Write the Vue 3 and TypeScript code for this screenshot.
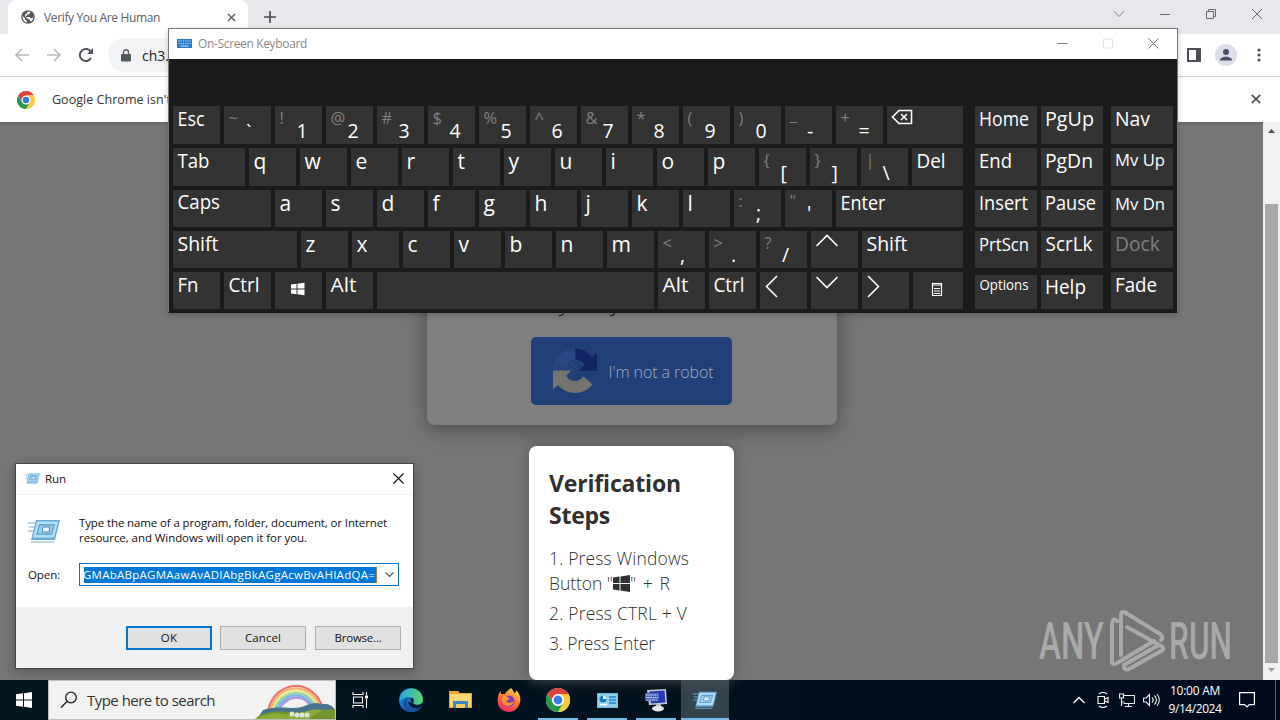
<script setup lang="ts">
interface Glyph { t: string; x: number; y: number; s: number; w?: number; dim?: boolean }
interface Key { w: number; g: Glyph[]; icon?: string; low?: boolean }

/* Spreads a label's letters so that it takes up the given width. */
const vFit = {
  mounted(el: HTMLElement, binding: { value: number }) {
    const natural = el.getBoundingClientRect().width
    const count = (el.textContent || '').trim().length
    el.style.letterSpacing = ((binding.value - natural) / count).toFixed(3) + 'px'
  }
}

const word = (t: string, w: number, len: number, y = 20, s = 19.5, x = 4.5): Key => ({ w, g: [{ t, x, y, s, w: len }] })
const letter = (t: string, y = 20.5): Key => ({ w: 47, g: [{ t, x: 4.5, y, s: 21 }] })
const pair = (top: string, main: string, x = 21.5, y = 32, ty = 18): Key => ({
  w: 47,
  g: [{ t: top, x: 4.5, y: ty, s: 16.5, dim: true }, { t: main, x, y, s: 19.5 }]
})
const icon = (name: string, w = 47): Key => ({ w, g: [], icon: name })

const rows: Key[][] = [
  [word('Esc', 47, 27), pair('~', '`', 22, 33), pair('!', '1'), pair('@', '2'), pair('#', '3'), pair('$', '4'), pair('%', '5'),
    pair('^', '6'), pair('&', '7'), pair('*', '8'), pair('(', '9'), pair(')', '0'), pair('_', '-', 22, 32, 15), pair('+', '=', 22.5), icon('back', 76)],
  [word('Tab', 72, 32), ...'qwertyuiop'.split('').map((c) => letter(c)), pair('{', '['), pair('}', ']'), pair('|', '\\'), word('Del', 51, 29)],
  [word('Caps', 98, 42.5, 19), ...'asdfghjkl'.split('').map((c) => letter(c, 20.5)), pair(':', ';', 22, 30, 17), pair('"', "'", 22, 30, 17), word('Enter', 127, 45, 20)],
  [word('Shift', 124, 41), ...'zxcvbnm'.split('').map((c) => letter(c, 21)), pair('<', ',', 22, 31, 18), pair('>', '.', 22, 31, 18), pair('?', '/', 22, 31, 18), icon('up'), word('Shift', 101, 41)],
  [word('Fn', 47, 21), word('Ctrl', 47, 31), icon('win'), word('Alt', 47, 26), { w: 277, g: [] }, word('Alt', 47, 26), word('Ctrl', 47, 31),
    icon('left'), icon('down'), icon('right'), icon('menu', 50)]
]

const side: Key[][] = [
  [word('Home', 62, 50, 20, 19.5, 4), word('PgUp', 62, 49, 19.5, 19.5, 4), word('Nav', 62, 35, 20, 19.5, 4)],
  [word('End', 62, 33, 20, 19.5, 4), word('PgDn', 62, 48, 19.5, 19.5, 4), word('Mv Up', 62, 50, 17.5, 16.5, 4)],
  [word('Insert', 62, 49, 20, 19.5, 4), word('Pause', 62, 51, 20, 19.5, 4), word('Mv Dn', 62, 50, 20, 16.5, 4)],
  [word('PrtScn', 62, 50, 20, 17.5, 4), word('ScrLk', 62, 47, 20, 19.5, 4.5), { w: 62, g: [{ t: 'Dock', x: 4, y: 20, s: 19.5, w: 45, dim: true }] }],
  [{ ...word('Options', 62, 49, 14.5, 14, 4.5), low: true }, { ...word('Help', 62, 41, 19, 19.5, 4), low: true }, word('Fade', 62, 42, 20, 19.5, 4)]
]
</script>

<template>
  <div class="desktop">
    <!-- browser -->
    <section class="browser">
      <header class="strip">
        <div class="tab">
          <svg class="globe" width="14" height="14" viewBox="0 0 14 14"><circle cx="7" cy="7" r="6.8" fill="#55585d" /><path d="M1.600 6 4 8.200v1.200l1.800 1.400v1.700C3 12 1.400 9.500 1.600 6zM6 1.700h3.200V3L7.800 4.300H6.200v1.300H4.800v1.300h4l1.100 1.300h1.600c.3-.8.8-1.500.8-2.300a5.500 5.500 0 0 1-2.600 5.600L9 11v-1.400H7.300L4 6.200V4.500l2-1z" fill="#fff" /></svg>
          <span class="tab-title"><span v-fit="116">Verify You Are Human</span></span>
          <svg width="9" height="9" viewBox="0 0 9 9"><path d="M1 1l7 7M8 1l-7 7" stroke="#5f6368" stroke-width="1.500" /></svg>
        </div>
        <svg class="plus" width="12" height="12" viewBox="0 0 12 12"><path d="M6 0v12M0 6h12" stroke="#4b4e52" stroke-width="1.700" /></svg>
        <div class="caption">
          <svg width="12" height="12" viewBox="0 0 12 12"><path d="M1 3l5 5.500L11 3" fill="none" stroke="#85888c" /></svg>
          <svg width="12" height="12" viewBox="0 0 12 12"><path d="M1 6.500h10" stroke="#66696d" /></svg>
          <svg width="12" height="12" viewBox="0 0 12 12"><path d="M1.500 3.500h7v7h-7zM3.500 3.500v-2h7v7h-2" fill="none" stroke="#66696d" /></svg>
          <svg width="12" height="12" viewBox="0 0 12 12"><path d="M1 1l10 10M11 1L1 11" stroke="#66696d" /></svg>
        </div>
      </header>
      <div class="toolbar">
        <svg width="16" height="16" viewBox="0 0 16 16"><path d="M15 8H2M8 2L2 8l6 6" fill="none" stroke="#b9bbbe" stroke-width="1.700" /></svg>
        <svg width="16" height="16" viewBox="0 0 16 16"><path d="M1 8h13M8 2l6 6-6 6" fill="none" stroke="#b9bbbe" stroke-width="1.700" /></svg>
        <svg width="16" height="16" viewBox="0 0 16 16"><path d="M13 11a6 6 0 1 1 0-6" fill="none" stroke="#505359" stroke-width="2" /><path d="M15 1v6H9z" fill="#505359" /></svg>
        <div class="address">
          <svg width="10" height="13" viewBox="0 0 10 13"><path d="M1 5h8a1 1 0 0 1 1 1v5.500a1 1 0 0 1-1 1H1a1 1 0 0 1-1-1V6a1 1 0 0 1 1-1z" fill="#55585d" /><path d="M2.500 5.500V3.200a2.500 2.500 0 0 1 5 0v2.300" fill="none" stroke="#55585d" stroke-width="1.400" /></svg>
          <span class="url">ch3.</span>
        </div>
        <div class="tools">
          <svg width="14" height="14" viewBox="0 0 14 14"><path d="M0 0h14v14H0zM2 2v10h7V2z" fill="#4b4e55" fill-rule="evenodd" /></svg>
          <svg width="22" height="22" viewBox="0 0 22 22"><circle cx="11" cy="11" r="11" fill="#dcdfe8" /><circle cx="11" cy="8" r="3" fill="#484e67" /><path d="M5 16.500c0-5 12-5 12 0z" fill="#484e67" /></svg>
          <svg width="4" height="14" viewBox="0 0 4 14"><g fill="#505359"><circle cx="2" cy="2" r="1.600" /><circle cx="2" cy="7" r="1.600" /><circle cx="2" cy="12" r="1.600" /></g></svg>
        </div>
      </div>
      <div class="infobar">
        <svg width="18" height="18" viewBox="0 0 24 24"><use href="#chrome-mark" /></svg>
        <span class="info-text"><span v-fit="119">Google Chrome isn't</span></span>
        <svg class="info-close" width="10" height="10" viewBox="0 0 10 10"><path d="M.8.800l8.400 8.400M9.200.800L.8 9.200" stroke="#505357" stroke-width="1.800" /></svg>
      </div>
      <div class="page">
        <div class="view">
          <div class="card">
            <svg class="tails" width="62" height="6" viewBox="0 0 62 6"><path d="M2 2.500c3 .8 4-.5 5-3.500M53 2.500c3 .8 4-.5 5-3.500" fill="none" stroke="#292929" stroke-width="1.300" /></svg>
            <div class="robot">
              <svg width="48" height="48" viewBox="0 0 48 48">
                <path d="M24.500 1.500c8 .2 12 3.500 16.500 9l5-5v18.200H27.500l6-6c-2-3.500-5-4.500-9-4.700z" fill="#112462" />
                <path d="M24 1.500v11.300c-4 .2-6 1.700-7.500 4l5.500 6.400H2C2 12 11 1.500 24 1.500z" fill="#264780" />
                <path d="M13 5l7 6M6 12l8 4M19 15l7 7" stroke="#34558a" fill="none" />
                <path d="M2 23.500h18l-5 5.500c5 7 13 6 17.500.5l9 8C32 49 16 48.500 7 38l-5 4.500z" fill="#74736f" />
              </svg>
              <span class="robot-text"><span v-fit="105">I'm not a robot</span></span>
            </div>
          </div>
          <div class="modal">
            <h2><span v-fit="132">Verification</span><br /><span v-fit="61">Steps</span></h2>
            <p><span v-fit="140">1. Press Windows</span><br /><span v-fit="64">Button "</span><svg class="flag" width="17" height="17" viewBox="0 0 17 17"><path d="M0 2.500 6.500 1.600V8H0zM7.500 1.400 17 0v8H7.500zM0 9h6.500v6.400L0 14.500zM7.500 9H17v8l-9.500-1.400z" fill="#303030" /></svg><span v-fit="41">" + R</span></p>
            <p><span v-fit="138">2. Press CTRL + V</span></p>
            <p><span v-fit="106">3. Press Enter</span></p>
          </div>
          <svg class="watermark" width="196" height="64" viewBox="0 0 196 64">
            <g fill="#a9a9a9" font-family="Roboto" font-size="52" font-weight="500">
              <text x="2" y="51" textLength="65" lengthAdjust="spacingAndGlyphs">ANY</text>
              <text x="132" y="51" textLength="63" lengthAdjust="spacingAndGlyphs">RUN</text>
            </g>
            <g fill="none" stroke="#a9a9a9" stroke-width="4" stroke-linejoin="round" stroke-linecap="round">
              <path d="M80 13q-4-4-5 3v38q1 4 5 1l37-22" />
              <path d="M84 47V7q0-5 5-2l34 21q4 4 1 6" />
              <path d="M90 19l34 19q5 3 0 5L92 61q-6 2-5-4l33-19" />
            </g>
          </svg>
        </div>
        <div class="scroll">
          <svg width="9" height="5" viewBox="0 0 9 5"><path d="M1 5l3.500-4L8 5z" fill="#505050" /></svg>
          <i></i>
          <svg width="9" height="5" viewBox="0 0 9 5"><path d="M1 0l3.500 4L8 0z" fill="#9a9a9a" /></svg>
        </div>
      </div>
    </section>

    <!-- on-screen keyboard -->
    <section class="osk">
      <header>
        <svg width="15" height="9" viewBox="0 0 15 9"><path d="M0 0h15v9H0z" fill="#2a7acb" /><path d="M1.500 2h12M1.500 4.500h12" stroke="#d3e7f9" stroke-dasharray="1.200 1" /><path d="M3.500 7h8" stroke="#d3e7f9" /></svg>
        <span class="osk-title"><span v-fit="109">On-Screen Keyboard</span></span>
        <div class="osk-caption">
          <svg width="11" height="11" viewBox="0 0 11 11"><path d="M.5 5.500h10" stroke="#777" /></svg>
          <svg width="11" height="11" viewBox="0 0 11 11"><path d="M.5 1h9v9h-9z" fill="none" stroke="#e2e2e2" /></svg>
          <svg width="11" height="11" viewBox="0 0 11 11"><path d="M.5.500l10 10M10.500.500l-10 10" stroke="#777" /></svg>
        </div>
      </header>
      <div class="board">
        <div v-for="(row, r) in rows" :key="r" class="row">
          <div class="group">
            <div v-for="(k, i) in row" :key="i" class="key" :style="{ width: k.w + 'px' }">
              <svg width="100%" height="100%">
                <text v-for="g in k.g" :key="g.t" :x="g.x" :y="g.y" :font-size="g.s" :textLength="g.w" lengthAdjust="spacingAndGlyphs" :class="{ dim: g.dim }">{{ g.t }}</text>
                <path v-if="k.icon === 'back'" d="M12 4.500h12.500v13H12l-6.500-6.500zM14 8l6 6M20 8l-6 6" />
                <path v-if="k.icon === 'up'" d="M5.500 15L16 4.500 26.500 15" />
                <path v-if="k.icon === 'down'" d="M5.500 5L16 15.500 26.500 5" />
                <path v-if="k.icon === 'left'" d="M17 4L6.500 14.500 17 25" />
                <path v-if="k.icon === 'right'" d="M6 4l10.500 10.500L6 25" />
                <path v-if="k.icon === 'win'" class="solid" d="M16 12.500l5.500-.7v4.700H16zM22.500 11.700l7-.9v5.700h-7zM16 17.500h5.500v4.700l-5.500-.7zM22.500 17.500h7v5.700l-7-.9z" />
                <path v-if="k.icon === 'menu'" class="thin" d="M19.500 11.500h9v12h-9zM19.500 13h9M21 16.500h6M21 19h6M21 21.500h6" />
              </svg>
            </div>
          </div>
          <div class="group side">
            <div v-for="(k, i) in side[r]" :key="i" class="key nav" :class="{ low: k.low }">
              <svg width="100%" height="100%">
                <text v-for="g in k.g" :key="g.t" :x="g.x" :y="g.y" :font-size="g.s" :textLength="g.w" lengthAdjust="spacingAndGlyphs" :class="{ dim: g.dim }">{{ g.t }}</text>
              </svg>
            </div>
          </div>
        </div>
      </div>
    </section>

    <!-- run dialog -->
    <section class="run">
      <header>
        <svg width="15" height="11" viewBox="0 0 32 24"><use href="#run-mark" /></svg>
        <span class="run-title"><span v-fit="21">Run</span></span>
        <svg class="run-close" width="11" height="11" viewBox="0 0 11 11"><path d="M.5.500l10 10M10.500.500l-10 10" stroke="#111" stroke-width="1.100" /></svg>
      </header>
      <div class="run-body">
        <div class="message">
          <svg width="32" height="24" viewBox="0 0 32 24"><use href="#run-mark" /></svg>
          <p><span v-fit="308">Type the name of a program, folder, document, or Internet</span><br /><span v-fit="228">resource, and Windows will open it for you.</span></p>
        </div>
        <div class="open">
          <label><span v-fit="32">Open:</span></label>
          <div class="combo">
            <div class="selected"><span v-fit="292">GMAbABpAGMAawAvADIAbgBkAGgAcwBvAHIAdQA=</span></div>
            <svg width="9" height="6" viewBox="0 0 9 6"><path d="M.5.500l4 4 4-4" fill="none" stroke="#555" stroke-width="1.200" /></svg>
          </div>
        </div>
      </div>
      <footer>
        <button class="primary"><span v-fit="16.500">OK</span></button>
        <button><span v-fit="36">Cancel</span></button>
        <button><span v-fit="47">Browse...</span></button>
      </footer>
    </section>

    <!-- taskbar -->
    <nav class="taskbar">
      <div class="start"><svg width="16" height="16" viewBox="0 0 16 16"><path d="M0 2.300 7 1.300v6.200H0zM8 1.200 16 0v7.500H8zM0 8.500h7v6.200l-7-1zM8 8.500h8V16l-8-1.200z" fill="#fff" /></svg></div>
      <div class="search">
        <svg width="18" height="18" viewBox="0 0 18 18"><circle cx="11" cy="6.500" r="5.300" fill="none" stroke="#222" stroke-width="1.300" /><path d="M7 10.500L1 16.500" stroke="#222" stroke-width="1.400" /></svg>
        <span class="search-text"><span v-fit="128">Type here to search</span></span>
        <svg class="rainbow" width="80" height="38" viewBox="0 0 80 38">
          <g fill="none" stroke-width="2.200">
            <path d="M13 30C20-2 59-4 68 28" stroke="#e8746a" />
            <path d="M15 30.500C22 1 57-1 66 28.500" stroke="#f2b06c" />
            <path d="M17 31C24 4 55 2 64 29" stroke="#efe58c" />
            <path d="M19 31C26 7 54 5 62 29.500" stroke="#8fd699" />
            <path d="M21 31C28 10 52 8 60 30" stroke="#79b0ee" />
            <path d="M23 31C30 13 51 11 58 30" stroke="#a793e0" />
          </g>
          <path d="M8 29c12-4 24-2 31-2 9 0 15-5 22-5 8 2 12-1 18 5v11H2z" fill="#47738f" />
          <path d="M0 38c8-8 24-8 34-7 15 1 23-2 46-3v10z" fill="#74952e" />
          <path d="M0 38c14-7 25-6 36-4 12-1 18-7 31-5L54 38z" fill="#8aab38" />
          <g fill="#dfe3df"><circle cx="37" cy="33" r="2.500" /><circle cx="42" cy="34" r="2.500" /><circle cx="47" cy="34" r="2.500" /><circle cx="52" cy="34" r="2.500" /></g>
        </svg>
      </div>
      <div class="cell view-btn"><svg width="17" height="16" viewBox="0 0 17 16"><path d="M1 0v2.500h10V0M1.500 5h9v6h-9zM1 16v-2.500h10V16M14.500 0v3M14.500 7v9" fill="none" stroke="#fff" stroke-width="1.100" /><path d="M13 3.500h3v3h-3z" fill="#fff" /></svg></div>
      <div class="cell">
        <svg width="24" height="24" viewBox="0 0 24 24">
          <defs><linearGradient id="sea" x1="0" y1="0" x2="1" y2="0"><stop offset="0" stop-color="#2ba9e6" /><stop offset="1" stop-color="#56d56b" /></linearGradient></defs>
          <circle cx="12" cy="12" r="12" fill="#1276c9" /><path d="M1 9C4-2 22-3 24 11c0 6-7 7-10 5 1-2 1-7-4-7-4 0-8 2-9 5z" fill="url(#sea)" /><path d="M8 12c-2 8 7 11 15 6-2 4-6 6-11 6C3 24 2 13 9 10z" fill="#174f9c" /><path d="M15 15c-5-1-4-6-1-5 1 1 1 3 0 5 4 4 9 1 10-1 0 3-2 5-4 6-6 1-10-1-11-6z" fill="#07182a" />
        </svg>
      </div>
      <div class="cell"><svg width="23" height="20" viewBox="0 0 23 20"><path d="M0 1h9l2 2h12v15H0z" fill="#e6a72d" /><path d="M1 4h21v13H1z" fill="#fbd673" /><path d="M4 11h15v7h-3v-3H7v3H4z" fill="#3b88c5" /><path d="M7 14h9v4H7z" fill="#f5ca61" /></svg></div>
      <div class="cell">
        <svg width="24" height="24" viewBox="0 0 24 24">
          <defs><linearGradient id="fire" x1=".8" y1="0" x2=".3" y2="1"><stop offset="0" stop-color="#ffe04a" /><stop offset=".45" stop-color="#ff7b2e" /><stop offset="1" stop-color="#ee2767" /></linearGradient></defs>
          <path d="M14 0c2 2 3 4 3 5 2 0 2-2 2-3 4 4 5 8 4 12-1 6-6 10-11 10C4 24-1 17 1 9c0-2 1-4 3-6v3l4 0c1-3 4-4 6-6z" fill="url(#fire)" /><circle cx="12" cy="13" r="5.500" fill="#793ec3" /><path d="M6 8c4-1 5 2 7 3-2 0-2 2-4 2 2 3 6 2 8 0-1 6-11 7-12-1z" fill="#ff942c" />
        </svg>
      </div>
      <div class="cell on">
        <svg width="24" height="24" viewBox="0 0 24 24">
          <g id="chrome-mark"><circle cx="12" cy="12" r="12" fill="#fff" /><path d="M1.600 6A12 12 0 0 1 22.400 6H12a6 6 0 0 0-5.200 9z" fill="#df4438" /><path d="M22.400 6A12 12 0 0 1 12 24l5.200-9A6 6 0 0 0 12 6z" fill="#fbca3b" /><path d="M12 24A12 12 0 0 1 1.600 6l5.200 9a6 6 0 0 0 10.400 0z" fill="#299a4b" /><circle cx="12" cy="12" r="5.500" fill="#fff" /><circle cx="12" cy="12" r="4.400" fill="#3879e8" /></g>
        </svg>
      </div>
      <div class="cell on"><svg width="21" height="15" viewBox="0 0 21 15"><path d="M0 0h21v15H0z" fill="#68bce8" /><path d="M1 1h19v13H1z" fill="#8fd0f0" /><circle cx="6" cy="6" r="3.500" fill="#197bb4" /><path d="M6 6V2.500A3.500 3.500 0 0 1 9.500 6z" fill="#e9f7ff" /><path d="M12 4h7M12 7h7M12 10h7" stroke="#1787ce" stroke-width="1.500" /><path d="M3 11.500h7" stroke="#fff" stroke-width="1.500" /></svg></div>
      <div class="cell on"><svg width="24" height="24" viewBox="0 0 24 24"><path d="M3 2l19-1 1 15-18 1z" fill="#c7cddb" /><path d="M5 3.500l15.500-1 1 12L7 15.500z" fill="#243caf" /><path d="M1 5h14v8H1z" fill="#4561c0" /><path d="M2 7h12M2 9.500h12M3 12h10" stroke="#e4e9fa" stroke-dasharray="1.500 .7" /><path d="M12 16h5v4h-5z" fill="#babdc6" /><ellipse cx="14" cy="20.500" rx="6" ry="3" fill="#e6e6e8" /></svg></div>
      <div class="cell on active">
        <svg width="24" height="18" viewBox="0 0 32 24">
          <g id="run-mark"><path d="M8 1h24l-5 20H3z" fill="#66addd" /><path d="M9 2.500h21l-4 16H5z" fill="#b6e0f6" /><path d="M11 5h16l-3 11H8z" fill="#5fa5d6" /><path d="M12 6.500h13l-2 8H10z" fill="#9bd0f0" /><path d="M15 8h7l-1 5h-7z" fill="#e7f5fd" stroke="#4688b9" /><path d="M0 4h8M1 8h6M0 12h5M3 23h23" stroke="#79afd4" stroke-width="1.200" /></g>
        </svg>
      </div>
      <div class="tray">
        <svg width="12" height="12" viewBox="0 0 12 12"><path d="M.5 9L6 3.500 11.500 9" fill="none" stroke="#fff" stroke-width="1.300" /></svg>
        <svg width="12" height="16" viewBox="0 0 12 16"><path d="M1 4.500h6.500v7H1zM8 7l3-1.500v5L8 9M2 2c2-2 6-2 8 0M2 14c2 2 6 2 8 0" fill="none" stroke="#eee" stroke-width="1.200" /></svg>
        <svg width="16" height="14" viewBox="0 0 16 14"><path d="M4 2.500h11.500v8H4.500M9.500 10.500v3M6 13.500h7M.5 1h4v4h-4zM2.500 5v8M2.500 9h3" fill="none" stroke="#eee" stroke-width="1.100" /></svg>
        <svg width="17" height="14" viewBox="0 0 17 14"><path d="M.6 5h2.600L6.500 1.500v11L3.200 9H.6zM9 4.500c1.500 1.500 1.500 3.500 0 5M11.500 2.500c2.500 2.500 2.500 6.500 0 9M14 1c3 3.500 3 8.500 0 12" fill="none" stroke="#eee" stroke-width="1.100" /></svg>
      </div>
      <div class="clock"><div><span v-fit="50">10:00 AM</span></div><div><span v-fit="53">9/14/2024</span></div></div>
      <div class="note"><svg width="16" height="17" viewBox="0 0 16 17"><path d="M.6.600h14.800v12h-5L8 15l-2.400-2.400h-5z" fill="none" stroke="#fff" stroke-width="1.200" /></svg></div>
      <i class="peek"></i>
    </nav>
  </div>
</template>

<style>
body { margin: 0; overflow: hidden; }
</style>

<style scoped>
* { box-sizing: border-box; }
svg { display: block; flex: none; }
span { white-space: nowrap; }
.desktop { position: relative; width: 1280px; height: 720px; overflow: hidden; font-family: "Open Sans", "Noto Sans", sans-serif; display: flex; flex-direction: column; }
.browser { height: 680px; display: flex; flex-direction: column; background: #fff; }
.strip { height: 34px; background: #e6e8ec; display: flex; align-items: flex-start; padding-left: 8px; }
.tab { width: 240px; height: 34px; background: #fff; border-radius: 8px 8px 0 0; display: flex; align-items: center; padding: 0 12px 0 13px; }
.tab-title { font-size: 12px; color: #5b5e62; margin-left: 9px; flex: 1; }
.plus { margin: 11px 0 0 16px; }
.caption { margin: 8px 17px 0 auto; display: flex; gap: 34px; }
.toolbar { height: 43px; border-bottom: 1px solid #d4d5d8; display: flex; align-items: center; padding-left: 14px; gap: 16px; }
.address { width: 1060px; height: 34px; margin-left: -2px; background: #f1f3f4; border-radius: 17px; display: flex; align-items: center; padding-left: 13px; gap: 11px; }
.url { font-size: 14px; color: #222; }
.tools { margin-left: auto; display: flex; align-items: center; gap: 14px; padding-right: 19px; }
.tools svg:last-child { margin-left: 6px; }
.infobar { height: 45px; display: flex; align-items: center; padding: 0 19px 0 17px; }
.info-text { font-size: 12.5px; color: #333; margin-left: 17px; }
.info-close { margin: -1px 0 0 auto; }
.page { flex: 1; display: flex; min-height: 0; background: linear-gradient(#676767, #767676 4px); }
.view { position: relative; width: 1263px; display: flex; flex-direction: column; align-items: center; }
.card { width: 410px; height: 303px; background: #7f7f7f; border-radius: 8px; box-shadow: 0 5px 20px #4e4e4e; display: flex; flex-direction: column; align-items: center; margin-left: 1px; }
.tails { margin: 191px 88px 0 0; }
.robot { width: 201px; height: 68px; margin-top: 18px; margin-right: 2px; background: #204178; border-radius: 5px; display: flex; align-items: center; padding-left: 20px; gap: 10px; }
.robot-text { color: #a2abbd; font-size: 16px; font-weight: 300; padding-top: 1px; }
.modal { width: 205px; height: 234px; margin-top: 21px; background: #fff; border-radius: 8px; padding: 21px 0 0 20px; box-shadow: 0 0 14px #555; color: #303030; }
h2 { margin: 0 0 15px; font-size: 23px; line-height: 32px; font-weight: 700; }
p { margin: 0; }
.modal p { font-size: 17.5px; line-height: 25px; font-weight: 300; margin-bottom: 5px; }
.flag { display: inline-block; vertical-align: -2px; }
.watermark { position: absolute; left: 1037px; top: 486px; }
.scroll { width: 17px; background: #f1f1f1; display: flex; flex-direction: column; align-items: center; padding: 6px 0; }
.scroll i { width: 13px; height: 459px; background: #a8a8a8; margin: 71px 0 5px; }

.osk { position: absolute; left: 168px; top: 28px; width: 1010px; height: 285px; background: #1a1a1a; border: 1px solid #777; border-bottom-color: #1a1a1a; box-shadow: 0 2px 6px #0003; }
.osk header { height: 30px; background: #fff; display: flex; align-items: center; padding: 0 0 1px 8px; }
.osk-title { font-size: 12px; color: #8b8b8b; margin-left: 6px; }
.osk-caption { margin-left: auto; display: flex; gap: 34.5px; padding-right: 18px; }
.board { padding: 47px 0 0 4px; display: grid; grid-template-rows: 38px 38px 37px 37px 37px; gap: 4px; }
.row { display: flex; gap: 12px; }
.group { display: flex; gap: 4px; }
.key { background: #333; height: 100%; overflow: hidden; flex: none; }
.key text { fill: #fff; }
.key text.dim { fill: #808080; }
.key path { fill: none; stroke: #fff; stroke-width: 1.6; }
.key path.solid { fill: #fff; stroke: none; }
.key path.thin { stroke-width: 1.2; }
.nav { width: 62px; }
.nav:last-child { margin-left: 4px; }
.low { height: 34px; margin-top: 3px; }

.run { position: absolute; left: 15px; top: 463px; width: 399px; height: 206px; background: #fff; border: 1px solid #454545; font-size: 11.5px; color: #111; display: flex; flex-direction: column; box-shadow: 0 3px 12px #0004; }
.run header { height: 31px; border-bottom: 1px solid #edf2f6; display: flex; align-items: center; padding: 0 9px 2px; }
.run-title { margin-left: 5px; }
.run-close { margin: 0 0 0 auto; }
.run-body { height: 112px; padding: 20px 14px 0 12px; }
.message { display: flex; align-items: center; gap: 19px; }
.message p { line-height: 15px; }
.message svg { margin-top: 2px; }
.open { display: flex; align-items: center; margin-top: 18px; }
.open label { width: 51px; }
.combo { width: 320px; height: 23px; border: 1px solid #0873c9; display: flex; align-items: center; justify-content: space-between; padding: 0 4px; }
.selected { width: 293px; height: 16px; line-height: 16px; background: #0078d7; color: #fff; overflow: hidden; border-right: 1px solid #ba713b; }
.selected span { margin-left: -1px; }
.run footer { flex: 1; background: #f0f0f0; display: flex; gap: 9px; justify-content: flex-end; padding: 19px 12px 0 0; }
button { width: 86px; height: 24px; padding: 0 0 2px; font: inherit; color: #111; background: #e1e1e1; border: 1px solid #adadad; }
button.primary { border: 2px solid #0078d7; margin-right: -1px; }

.taskbar { height: 40px; background: linear-gradient(90deg, #02161e, #02111e 55%, #020b1e); display: flex; color: #fff; }
.start { width: 48px; display: flex; align-items: center; justify-content: center; }
.search { width: 288px; background: #f2f2f2; border: 1px solid #bdbdbd; display: flex; align-items: center; padding-left: 11px; position: relative; }
.search-text { color: #333; font-size: 15px; margin-left: 9px; }
.rainbow { position: absolute; right: 0; bottom: 0; }
.cell { width: 48px; display: flex; align-items: center; justify-content: center; margin-right: 1px; border-top: 2px solid transparent; border-bottom: 2px solid transparent; }
.cell.on { background: linear-gradient(#76b9ed, #76b9ed) center bottom / 40px 2px no-repeat border-box; }
.cell.active { background: linear-gradient(#76b9ed, #76b9ed) center bottom / 48px 2px no-repeat border-box, #34444e; }
.view-btn { margin-right: 3px; }
.tray { margin-left: auto; display: flex; align-items: center; gap: 10px; }
.tray svg:nth-child(2) { margin-left: 2px; }
.tray svg:nth-child(4) { margin-left: -2px; }
.clock { width: 70px; font: 12px/18px "Open Sans", sans-serif; text-align: center; padding-top: 2px; }
.note { width: 34px; display: flex; align-items: center; justify-content: center; }
.peek { width: 1px; background: #58606b; margin: 0 4px 0 11px; }
</style>
